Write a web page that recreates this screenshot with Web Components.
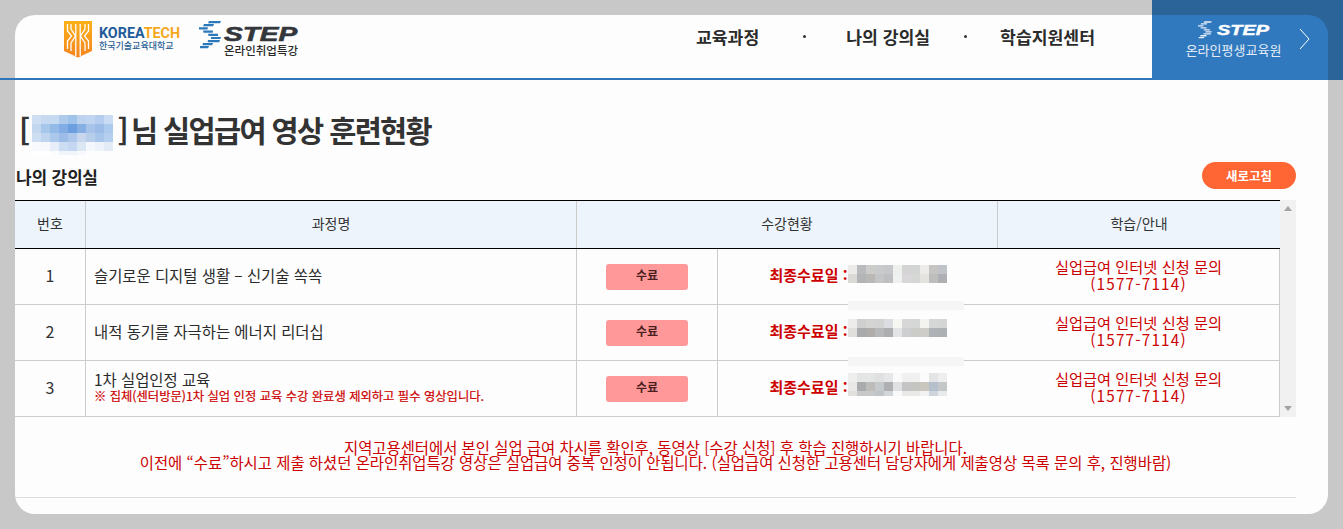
<!DOCTYPE html>
<html lang="ko">
<head>
<meta charset="utf-8">
<title>실업급여 영상 훈련현황</title>
<style>
  html, body { margin: 0; height: 100%; overflow: hidden; }
  body {
    background: #c8c8c8;
    font-family: "Noto Sans CJK KR", "Noto Sans", sans-serif;
    color: #333;
  }
</style>
</head>
<body>

<page-card>
  <site-header></site-header>
  <main-title>
    <blur-patch cell="9" cells="cfdff3 c5d9f1 c5d9f1 aecbec a0c3ea bcd2ee c0d5ef b5cdee c9dcf3|c3d7ef a6c6ec 94bae8 82ade4 6d9fe0 86afe4 a7c3ea 9dbde8 abcaee|cdddf2 bfd4ef abc7ec 9dbde8 adc8ea c8d7ee b8cfec a8c5ea b5d0ef|f7f9fd f6f8fc e8eef9 ccdcf3 c5d7f0 dbe8f4 f4f7fc eef2fa e3ebf7|ffffff ffffff fbfcfe f0f4fb f0f5fb f7f9fc fdfdfd fdfdfd fdfdfd" last="4"></blur-patch>
  </main-title>
  <section-bar></section-bar>
  <course-table>
    <course-row num="1">
      <span slot="title">슬기로운 디지털 생활 – 신기술 쏙쏙</span>
      <blur-patch slot="date" style="align-self:flex-start;margin-top:16px" cell="9" cells="ecebea b9babb ccccca c9cacb c5c7cb eef0ee d4d4d5 d3d5d5 edecea c6c5c3 bfc2c8|dbd9d6 b3b4b6 b9b8b5 c4c5c7 bdbfc1 eff1f0 d9d7da d5d7d5 e4e3e0 bebebd aeafb3"></blur-patch>
      <smear-bar slot="smear"></smear-bar>
    </course-row>
    <course-row num="2">
      <span slot="title">내적 동기를 자극하는 에너지 리더십</span>
      <blur-patch slot="date" style="align-self:flex-start;margin-top:14px" cell="9" cells="edecea cfcfcf d4d4d3 d3d3d3 dcdde0 f6f6f3 d7d7d7 d5d7d6 f3f3f0 d5d6d6 d4d6d6|e0dfdc a9aaac aeadab b7b8b9 acaeb0 e3e4e6 cdced0 cbccc8 cecdc7 aeb2b6 adb1b4"></blur-patch>
      <smear-bar slot="smear"></smear-bar>
    </course-row>
    <course-row num="3">
      <span slot="title">1차 실업인정 교육</span>
      <span slot="note">※ 집체(센터방문)1차 실업 인정 교육 수강 완료생 제외하고 필수 영상입니다.</span>
      <blur-patch slot="date" style="align-self:flex-start;margin-top:12px" cell="9" last="5" cells="eeeeed e4e5e5 e4e5e5 e0e0e0 e6e7e9 fafafa f0f0f0 f0f0f0 fbfbfb e2e4e6 eeeeee|e9e8e6 aaabad bdbcb9 c5cbcc aeb0b2 e0e1e2 c4c5c4 c4c4c0 c9c6bf b5c0cc c3c7c8|e2e0dd c7c8ca c8c8c8 c0c4c6 d3d6d9 f9f9f9 e9e9e8 e9e9e8 f2f2f2 ced4dc e9eaeb"></blur-patch>
    </course-row>
  </course-table>
  <notice-box>
    <div>지역고용센터에서 본인 실업 급여 차시를 확인후, 동영상 [수강 신청] 후 학습 진행하시기 바랍니다.</div>
    <div>이전에 “수료”하시고 제출 하셨던 온라인취업특강 영상은 실업급여 중복 인정이 안됩니다. (실업급여 신청한 고용센터 담당자에게 제출영상 목록 문의 후, 진행바람)</div>
  </notice-box>
</page-card>

<script>
'use strict'

const define = (name, css, html, setup) => {
  customElements.define(name, class extends HTMLElement {
    connectedCallback() {
      if (this.shadowRoot) return
      const root = this.attachShadow({ mode: 'open' })
      root.innerHTML = `<style>${css}</style>` + (typeof html === 'function' ? html(this) : html)
      if (setup) setup(root, this)
    }
  })
}

// the stripes that make the S of the STEP mark
const stepMark = (fill) => `
  <path fill="${fill}" d="M10 0h12l-1 2.200H9zM5 3h10l-1 2.200H4zM0 6.200h9l-.6 2.200H0zM4 9.500h10l-.4 2.200H4.600zM9 12.700h10v2.200H9.600zM12 15.900h10l-.6 2.200H12zM9 19h12l-.8 2.200H8.600zM4 22h10l-.8 2.200H3.400zM1 25h9l-.8 2.200H1z"/>
`

define('page-card', `
  :host {
    display: block;
    position: relative;
    box-sizing: border-box;
    margin: 15px;
    height: 499px;
    background: #fdfdfd;
    border-radius: 20px;
  }
`, `<slot></slot>`)

define('site-header', `
  :host {
    display: flex;
    align-items: stretch;
    box-sizing: border-box;
    height: 65px;
    position: relative;
  }
  /* line runs out of the card over the grey margin */
  :host::before {
    content: '';
    position: absolute;
    left: -15px; right: 176px; bottom: 0;
    height: 2px;
    background: #2f75ba;
  }
  /* darker band behind the blue corner */
  :host::after {
    content: '';
    position: absolute;
    right: -15px; top: -15px;
    width: 191px; height: 80px;
    background: #2a6499;
  }
  .logos { display: flex; padding-left: 49px; align-items: flex-start; }
  .shield { display: block; width: 28px; height: 37px; margin-top: 6px; flex: none; }
  .kt { margin: 11px 0 0 7px; width: 73px; white-space: nowrap; }
  .kt b {
    display: block;
    font: 700 14.3px/14px "Liberation Sans Narrow", "Roboto", sans-serif;
    color: #1f5c99;
  }
  .kt b u { text-decoration: none; color: #f5a81f; }
  .kt span { display: block; font-size: 9px; line-height: 12px; font-weight: 500; color: #2a5f95; }
  .mark { display: block; width: 24px; height: 30px; margin: 6px 0 0 27px; flex: none; }
  .st { margin: 11px 0 0 1px; width: 75px; white-space: nowrap; }
  .word {
    display: block;
    font-family: "Liberation Sans", sans-serif;
    font-style: italic;
    font-weight: 700;
    transform-origin: 0 50%;
  }
  .st .word { font-size: 20px; line-height: 17px; width: 52px; transform: scaleX(1.4); color: #33373b; -webkit-text-stroke: .6px #33373b; }
  .st span:last-child { display: block; margin-top: 1px; font-size: 11.5px; line-height: 13px; font-weight: 500; color: #2a2a2a; }
  nav {
    margin-left: auto;
    display: flex;
    align-items: center;
    height: 42px;
    margin-right: 57px;
    font-size: 17.2px;
    font-weight: 700;
    color: #2b2b2b;
    white-space: nowrap;
  }
  nav i { width: 3px; height: 3px; border-radius: 50%; background: #333; }
  .d1 { margin: 0 40px 0 44px; }
  .d2 { margin: 0 33px 0 34px; }
  .cta {
    position: relative;
    z-index: 1;
    width: 176px;
    box-sizing: border-box;
    background: #3079bf;
    border-top-right-radius: 20px;
    color: #e4edf6;
    display: flex;
    align-items: flex-start;
  }
  .cta .in { margin-left: 34px; width: 95px; display: flex; flex-direction: column; align-items: center; }
  .cta .top { display: flex; align-items: center; margin-top: 6px; height: 18px; width: 71px; white-space: nowrap; }
  .cta .top svg { display: block; width: 15px; height: 18px; flex: none; margin-right: 4px; }
  .cta .word { font-size: 14px; line-height: 18px; width: 37px; transform: scaleX(1.42); color: #fff; -webkit-text-stroke: .4px #fff; }
  .cta .sub { font-size: 13px; line-height: 16px; margin-top: 3px; white-space: nowrap; }
  .cta svg.chev { width: 11px; height: 22px; margin-left: 18px; margin-top: 13px; }
`, `
  <div class="logos">
    <svg class="shield" viewBox="0 0 28 37">
      <defs>
        <linearGradient id="og" x1="0" y1="0" x2="0" y2="1">
          <stop offset="0" stop-color="#fbb116"/><stop offset="1" stop-color="#f58420"/>
        </linearGradient>
      </defs>
      <path fill="url(#og)" d="M0 0h28v30l-14 6.500-14-6.500z"/>
      <path fill="none" stroke="#fdfdfd" stroke-width="1.300" d="M3.500 3v7l4 5-4 5v8M7 3v5l4.500 7-4.500 7v8M11.800 3v32M16.200 3v32M21 3v5l-4.500 7 4.500 7v8M24.500 3v7l-4 5 4 5v8"/>
    </svg>
    <div class="kt"><b>KOREA<u>TECH</u></b><span>한국기술교육대학교</span></div>
    <svg class="mark" viewBox="0 0 24 30">${stepMark('#2b78bb')}</svg>
    <div class="st"><span class="word">STEP</span><span>온라인취업특강</span></div>
  </div>
  <nav>
    <span>교육과정</span><i class="d1"></i><span>나의 강의실</span><i class="d2"></i><span>학습지원센터</span>
  </nav>
  <div class="cta">
    <div class="in">
      <div class="top">
        <svg viewBox="0 0 24 28">${stepMark('#e4edf6')}</svg>
        <span class="word">STEP</span>
      </div>
      <span class="sub">온라인평생교육원</span>
    </div>
    <svg class="chev" viewBox="0 0 11 22"><path d="M1 1l9 10-9 10" fill="none" stroke="#fff" stroke-width="1"/></svg>
  </div>
`)

define('main-title', `
  :host {
    display: flex;
    align-items: center;
    height: 40px;
    margin-top: 29px;
    padding-left: 4px;
    font-size: 29.5px;
    font-weight: 700;
    line-height: 40px;
    letter-spacing: -1.66px;
    color: #333;
    white-space: nowrap;
  }
  ::slotted(blur-patch) { align-self: flex-start; margin: 6px 5px 0 3px; }
`, `<span>[</span><slot></slot><span>]</span><span style="margin-left:4px">님 실업급여 영상 훈련현황</span>`)

define('blur-patch', `
  :host { display: inline-block; line-height: 0; flex: none; }
  div { display: flex; }
  b { display: block; flex: none; }
`, (el) => {
  const size = +el.getAttribute('cell')
  const rows = el.getAttribute('cells').split('|')
  const last = el.getAttribute('last')
  return rows.map((r, i) => {
    const h = last && i === rows.length - 1 ? +last : size
    return '<div>' + r.split(' ').map(c => `<b style="width:${size}px;height:${h}px;background:#${c}"></b>`).join('') + '</div>'
  }).join('')
})

define('section-bar', `
  :host {
    display: flex;
    align-items: center;
    justify-content: space-between;
    box-sizing: border-box;
    width: 1281px;
    height: 27px;
    margin-top: 13px;
  }
  h2 { margin: 0 0 0 1px; padding-top: 2px; font-size: 17px; font-weight: 700; color: #222; letter-spacing: -.2px; }
  button {
    width: 94px; height: 27px;
    padding: 0;
    border: 0;
    border-radius: 14px;
    background: #ff6633;
    color: #fff;
    font: 700 12.5px "Noto Sans CJK KR", sans-serif;
  }
`, `<h2>나의 강의실</h2><button>새로고침</button>`)

define('course-table', `
  :host {
    display: flex;
    width: 1281px;
    margin-top: 11px;
  }
  .tbl { width: 1265px; }
  .head {
    display: grid;
    grid-template-columns: 71px 491px 421px 282px;
    height: 47px;
    border-top: 1px solid #000;
    border-bottom: 1px solid #000;
    background: #edf4fc;
    font-size: 14px;
    color: #333;
  }
  .head div { display: flex; align-items: center; justify-content: center; border-right: 1px solid #ccc; padding-bottom: 4px; box-sizing: border-box; }
  .head div:last-child { border-right: 0; }
  .bar { width: 16px; background: #f1f1f1; display: flex; flex-direction: column; justify-content: space-between; align-items: center; padding: 6px 0; box-sizing: border-box; }
  .bar i { width: 0; height: 0; border-left: 4px solid transparent; border-right: 4px solid transparent; }
  .bar .up { border-bottom: 5px solid #a3a3a3; }
  .bar .dn { border-top: 5px solid #a3a3a3; }
`, `
  <div class="tbl">
    <div class="head"><div>번호</div><div>과정명</div><div>수강현황</div><div>학습/안내</div></div>
    <slot></slot>
  </div>
  <div class="bar"><i class="up"></i><i class="dn"></i></div>
`)

define('course-row', `
  :host {
    display: grid;
    grid-template-columns: 71px 491px 141px 280px 282px;
    height: 56px;
    box-sizing: border-box;
    border-bottom: 1px solid #ccc;
    position: relative;
  }
  .c { border-right: 1px solid #ccc; display: flex; align-items: center; min-width: 0; box-sizing: border-box; }
  .c:nth-child(5) { border-right: 0; }
  .num { justify-content: center; font-size: 16px; color: #333; padding-bottom: 4px; }
  .name { flex-direction: column; align-items: flex-start; justify-content: center; padding: 0 0 2px 8px; font-size: 15.4px; line-height: 17px; color: #2b2b2b; white-space: nowrap; }
  ::slotted([slot=note]) { font-size: 12.3px; line-height: 16px; color: #cc0000; -webkit-text-stroke: .2px #cc0000; }
  .stat { justify-content: center; }
  .pill { width: 82px; height: 26px; box-sizing: border-box; padding-bottom: 4px; border-radius: 3px; background: #ff9999; color: #4a1f1f; font-size: 12px; font-weight: 700; display: flex; align-items: center; justify-content: center; }
  .when { justify-content: center; color: #cc0000; font-size: 15px; font-weight: 700; white-space: nowrap; }
  .when span { padding-bottom: 4px; }
  .help { flex-direction: column; justify-content: center; padding-bottom: 3px; color: #cc0000; font-size: 15.25px; line-height: 17px; }
  .help div + div { letter-spacing: 1.2px; }
`, (el) => `
  <div class="c num">${el.getAttribute('num')}</div>
  <div class="c name"><slot name="title"></slot><slot name="note"></slot></div>
  <div class="c stat"><div class="pill">수료</div></div>
  <div class="c when"><span>최종수료일 :</span><slot name="date"></slot></div>
  <div class="c help"><div>실업급여 인터넷 신청 문의</div><div>(1577-7114)</div></div>
  <slot name="smear"></slot>
`)

// pale strip left over from the masking, lies over the row line
define('smear-bar', `
  :host {
    position: absolute;
    left: 833px; bottom: -6px;
    width: 116px; height: 9px;
    background: #f5f5f5;
  }
`, ``)

define('notice-box', `
  :host {
    display: block;
    width: 1281px;
    box-sizing: border-box;
    height: 81px;
    padding-top: 23px;
    border-bottom: 1px solid #ddd;
    text-align: center;
    font-size: 15.4px;
    line-height: 15px;
    color: #cc0000;
    white-space: nowrap;
  }
`, `<slot></slot>`)
</script>
</body>
</html>
